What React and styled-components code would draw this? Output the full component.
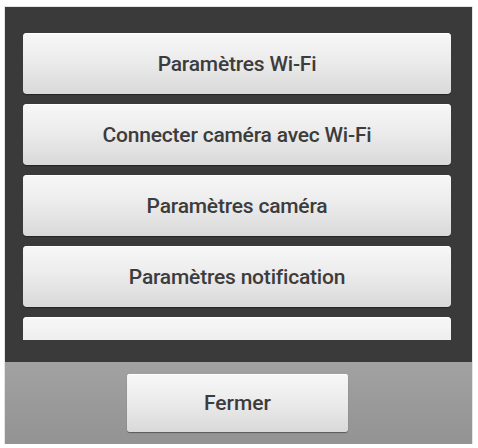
import React from 'react';
import styled, { createGlobalStyle } from 'styled-components';

const GlobalStyle = createGlobalStyle`
  html, body {
    margin: 0;
    padding: 0;
    background: #ffffff;
  }
  body {
    font-family: Roboto, "Liberation Sans", Arial, sans-serif;
  }
`;

const items = [
  'Paramètres Wi-Fi',
  'Connecter caméra avec Wi-Fi',
  'Paramètres caméra',
  'Paramètres notification',
  '',
];

const App = () => {
  return (
    <>
      <GlobalStyle />
      <Dialog>
        <Panel>
          <MenuList>
            {items.map((label, i) => (
              <MenuButton key={i}>{label}</MenuButton>
            ))}
          </MenuList>
        </Panel>
        <Footer>
          <CloseButton>Fermer</CloseButton>
        </Footer>
      </Dialog>
    </>
  );
};

const Dialog = styled.div`
  width: 467px;
  height: 437px;
  margin: 7px 0 0 5px;
  display: flex;
  flex-direction: column;
  box-shadow: 0 0 0 1px #e4e4e4;
`;

const Panel = styled.div`
  height: 355px;
  box-sizing: border-box;
  padding: 26px 21px 0 18px;
  background: #3a3a3a;
`;

const MenuList = styled.div`
  height: 307px;
  overflow: hidden;
  display: flex;
  flex-direction: column;
  gap: 10px;
`;

const buttonFace = `
  border: none;
  border-radius: 4px;
  background: linear-gradient(180deg, #f7f7f7 0%, #ececec 45%, #d9d9d9 100%);
  box-shadow: inset 0 1px 0 #ffffff, 0 1px 1px rgba(0, 0, 0, 0.4);
  color: #3c3c3c;
  font-family: Roboto, "Liberation Sans", Arial, sans-serif;
  font-weight: 500;
  text-align: center;
  cursor: pointer;
  padding: 0;
`;

const MenuButton = styled.button`
  ${buttonFace}
  flex: 0 0 61px;
  height: 61px;
  width: 100%;
  font-size: 21px;
  letter-spacing: -0.2px;
`;

const Footer = styled.div`
  flex: 1;
  box-sizing: border-box;
  padding: 12px 0 0 122px;
  background: linear-gradient(180deg, #a2a2a2 0%, #9a9a9a 50%, #939393 100%);
`;

const CloseButton = styled.button`
  ${buttonFace}
  width: 221px;
  height: 58px;
  font-size: 21px;
  border-radius: 3px;
`;

export default App;
